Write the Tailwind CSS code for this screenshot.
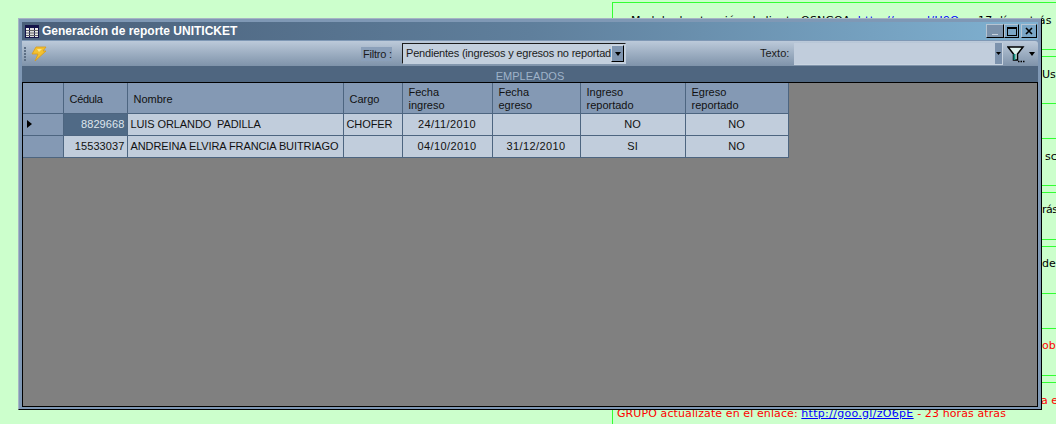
<!DOCTYPE html>
<html lang="en">
  <head>
    <meta charset="UTF-8" />
    <title>Generación de reporte UNITICKET</title>
    <script src="https://cdn.jsdelivr.net/npm/@tailwindcss/browser@4"></script>
  </head>
  <body class="relative w-[1056px] h-[424px] overflow-hidden bg-[#ccffcc] font-['DejaVu_Sans',sans-serif]">
    <!-- Page behind the window -->
    <div class="absolute left-[612px] top-[2px] w-[444px] h-px bg-[#33ff33]"></div>
    <div class="absolute left-[612px] top-[2px] w-px h-[422px] bg-[#33ff33]"></div>
    <div class="absolute left-[1042px] top-[49px] w-[14px] h-px bg-[#33ff33]"></div>
    <div class="absolute left-[1042px] top-[56px] w-[14px] h-px bg-[#33ff33]"></div>
    <div class="absolute left-[1042px] top-[103px] w-[14px] h-px bg-[#33ff33]"></div>
    <div class="absolute left-[1042px] top-[138px] w-[14px] h-px bg-[#33ff33]"></div>
    <div class="absolute left-[1042px] top-[185px] w-[14px] h-px bg-[#33ff33]"></div>
    <div class="absolute left-[1042px] top-[192px] w-[14px] h-px bg-[#33ff33]"></div>
    <div class="absolute left-[1042px] top-[239px] w-[14px] h-px bg-[#33ff33]"></div>
    <div class="absolute left-[1042px] top-[246px] w-[14px] h-px bg-[#33ff33]"></div>
    <div class="absolute left-[1042px] top-[293px] w-[14px] h-px bg-[#33ff33]"></div>
    <div class="absolute left-[1042px] top-[328px] w-[14px] h-px bg-[#33ff33]"></div>
    <div class="absolute left-[1042px] top-[375px] w-[14px] h-px bg-[#33ff33]"></div>
    <div class="absolute left-[1042px] top-[382px] w-[14px] h-px bg-[#33ff33]"></div>

    <p class="absolute left-[631px] top-[14px] whitespace-nowrap text-[11px] leading-[13px] tracking-[0.15px] text-black">Modulo de atención al cliente OSNGOA: <span class="text-[#0000ff] underline tracking-[0.4px]">http://goo.gl/U9Q</span>&nbsp;&nbsp;-&nbsp;&nbsp;17 días atrás</p>
    <p class="absolute left-[1042px] top-[68px] text-[11px] leading-[13px] text-black">Us</p>
    <p class="absolute left-[1045px] top-[150px] text-[11px] leading-[13px] text-black">sc</p>
    <p class="absolute left-[1042px] top-[203px] whitespace-nowrap text-[11px] leading-[13px] tracking-[-0.5px] text-black">rás</p>
    <p class="absolute left-[1042px] top-[257px] text-[11px] leading-[13px] text-black">de</p>
    <p class="absolute left-[1042px] top-[339px] text-[11px] leading-[13px] text-[#ff0000]">ob</p>
    <p class="absolute left-[1041px] top-[394px] whitespace-nowrap text-[11px] leading-[13px] text-[#ff0000]">a e</p>
    <p class="absolute left-[617px] top-[407px] whitespace-nowrap text-[11px] leading-[13px] tracking-[0.1px] text-[#ff0000]">GRUPO actualízate en el enlace: <span class="text-[#0000ff] underline tracking-[0.3px]">http://goo.gl/zO6pE</span> - 23 horas atras</p>

    <!-- Window -->
    <div class="absolute left-[18px] top-[18px] w-[1024px] h-[392px] flex flex-col bg-[#7f98b5] border border-t-[#a7b5c4] border-l-[#a7b5c4] border-r-black border-b-black pt-[3px] px-[3px] pb-[2px] font-['Liberation_Sans',sans-serif]">
      <!-- Title bar -->
      <div class="h-[18px] shrink-0 flex items-center pl-[3px] pr-[1px] bg-gradient-to-r from-[#4a607a] via-[#5f7f9c] to-[#80b2d2]">
        <svg class="w-[14px] h-[13px] shrink-0" viewBox="0 0 14 13">
          <rect width="14" height="13" fill="#14144a" />
          <rect x="1" y="3" width="3" height="9" fill="#eee" />
          <rect x="5" y="3" width="4" height="9" fill="#ddd" />
          <rect x="10" y="3" width="3" height="9" fill="#eee" />
          <path d="M1 5.5h12M1 8h12M1 10.5h12" stroke="#666" stroke-width="1" />
        </svg>
        <span class="ml-[3px] text-[12px] font-bold text-white whitespace-nowrap">Generación de reporte UNITICKET</span>
        <div class="ml-auto flex gap-0">
          <button class="w-[18px] h-[14px] flex items-end justify-center pb-[2px] bg-[#7b92ab] border border-[#b6c4d2] border-r-black border-b-black">
            <span class="block w-[6px] h-px bg-[#c8d2dc]"></span>
          </button>
          <button class="w-[15px] h-[14px] flex items-center justify-center bg-[#7aa6c6] border border-[#b6c4d2] border-r-black border-b-black">
            <span class="block w-[10px] h-[9px] border border-t-2 border-black"></span>
          </button>
          <button class="ml-[2px] w-[16px] h-[14px] flex items-center justify-center bg-[#7aa6c6] border border-[#b6c4d2] border-r-black border-b-black">
            <svg class="w-[8px] h-[8px]" viewBox="0 0 8 8"><path d="M1 1l6 6M7 1L1 7" stroke="#000" stroke-width="1.6" /></svg>
          </button>
        </div>
      </div>

      <!-- Toolbar -->
      <div class="mt-px h-[25px] shrink-0 flex items-center relative rounded-tr-[3px] bg-gradient-to-b from-[#bccada] to-[#7f93aa] text-[11px] text-[#1b1b1b]">
        <div class="ml-[2px] flex flex-col gap-px">
          <span class="block w-[2px] h-[2px] bg-[#5d6f85]"></span>
          <span class="block w-[2px] h-[2px] bg-[#5d6f85]"></span>
          <span class="block w-[2px] h-[2px] bg-[#5d6f85]"></span>
          <span class="block w-[2px] h-[2px] bg-[#5d6f85]"></span>
          <span class="block w-[2px] h-[2px] bg-[#5d6f85]"></span>
        </div>
        <svg class="ml-[5px] w-[16px] h-[18px]" viewBox="0 0 16 18">
          <path d="M5 2h10l-3 4h3L4 16l3-7H1z" fill="#f3c12f" stroke="#d99b16" stroke-width="0.8" />
          <path d="M6 4h5L8 7" fill="#fbe68b" />
        </svg>
        <span class="ml-[314px] w-[31px] pl-[2px] whitespace-nowrap leading-[14px] tracking-[-0.2px] bg-[#8ba0ba]">Filtro :</span>
        <div class="ml-[10px] w-[224px] h-[21px] flex items-stretch bg-[#c3cfdd] border border-[#1c1c1c] border-r-[#c3cfdd] border-b-[#c3cfdd]">
          <span class="flex-1 overflow-hidden whitespace-nowrap pl-[3px] leading-[18px] text-[11px] tracking-[-0.2px]">Pendientes (ingresos y egresos no reportados)</span>
          <span class="w-[13px] h-[17px] mr-[1px] mt-px flex items-center justify-center bg-[#7f95b0] border border-[#cfd8e2] border-r-black border-b-black">
            <svg class="w-[6px] h-[4px]" viewBox="0 0 6 4"><path d="M0 0h6L3 4z" fill="#000" /></svg>
          </span>
        </div>
        <span class="ml-[134px] w-[30px] whitespace-nowrap">Texto:</span>
        <div class="ml-[4px] w-[209px] h-[22px] flex bg-[#c1cddc] border-r border-b border-[#c9d4e0]">
          <span class="flex-1"></span>
          <span class="w-[7px] flex items-center justify-center bg-[#7c92ad]">
            <svg class="w-[5px] h-[3px]" viewBox="0 0 5 3"><path d="M0 0h5L2.5 3z" fill="#000" /></svg>
          </span>
        </div>
        <svg class="ml-[4px] w-[18px] h-[18px]" viewBox="0 0 18 18">
          <path d="M1 2h15l-5.500 7v6h-4V9z" fill="#dff2ee" stroke="#000" stroke-width="1.500" />
          <path d="M6.500 9h2v6h-2z" fill="#0f8f7f" />
          <path d="M11 16.500h1.500M13.500 16.500h1.500M16 16.500h1.500" stroke="#000" stroke-width="1.500" />
        </svg>
        <svg class="ml-[4px] w-[6px] h-[4px]" viewBox="0 0 6 4"><path d="M0 0h6L3 4z" fill="#000" /></svg>
      </div>

      <!-- Section band -->
      <div class="h-[16px] shrink-0 overflow-hidden bg-[#4f6680] text-center text-[11px] leading-[21px] text-[#9fb3c9]">EMPLEADOS</div>

      <!-- Grid -->
      <div class="flex-1 bg-[#808080] border border-black overflow-hidden">
        <table class="table-fixed border-collapse text-[11px] text-[#111] w-[765px]">
          <colgroup>
            <col class="w-[40px]" /><col class="w-[64px]" /><col class="w-[216px]" /><col class="w-[59px]" /><col class="w-[90px]" /><col class="w-[88px]" /><col class="w-[105px]" /><col class="w-[103px]" />
          </colgroup>
          <thead>
            <tr class="h-[30px] bg-[#8499b4] text-left font-normal leading-[13px]">
              <th class="border border-t-0 border-l-0 border-[#4d6580] font-normal"></th>
              <th class="border border-t-0 border-[#4d6580] font-normal pl-[6px] pt-[3px] tracking-[-0.3px]">Cédula</th>
              <th class="border border-t-0 border-[#4d6580] font-normal pl-[6px] pt-[3px]">Nombre</th>
              <th class="border border-t-0 border-[#4d6580] font-normal pl-[6px] pt-[3px]">Cargo</th>
              <th class="border border-t-0 border-[#4d6580] font-normal pl-[6px] pt-[2px]">Fecha<br />ingreso</th>
              <th class="border border-t-0 border-[#4d6580] font-normal pl-[6px] pt-[2px]">Fecha<br />egreso</th>
              <th class="border border-t-0 border-[#4d6580] font-normal pl-[6px] pt-[2px]">Ingreso<br />reportado</th>
              <th class="border border-t-0 border-[#4d6580] font-normal pl-[6px] pt-[2px]">Egreso<br />reportado</th>
            </tr>
          </thead>
          <tbody class="bg-[#c1cddc]">
            <tr class="h-[22px]">
              <td class="border border-l-0 border-[#4d6580] bg-[#8499b4] pl-[4px]">
                <svg class="w-[5px] h-[8px]" viewBox="0 0 5 8"><path d="M0 0l5 4-5 4z" fill="#000" /></svg>
              </td>
              <td class="border border-[#4d6580] bg-[#506a86] text-right pr-[2px] tracking-[0.1px] text-[#dfe6ee]">8829668</td>
              <td class="border border-[#4d6580] pl-[3px] whitespace-nowrap tracking-[-0.1px]">LUIS ORLANDO&nbsp; PADILLA</td>
              <td class="border border-[#4d6580] pl-[3px] tracking-[-0.1px]">CHOFER</td>
              <td class="border border-[#4d6580] text-center tracking-[0.4px]">24/11/2010</td>
              <td class="border border-[#4d6580] text-center"></td>
              <td class="border border-[#4d6580] text-center">NO</td>
              <td class="border border-[#4d6580] text-center">NO</td>
            </tr>
            <tr class="h-[22px]">
              <td class="border border-l-0 border-[#4d6580] bg-[#8499b4]"></td>
              <td class="border border-[#4d6580] text-right pr-[2px] tracking-[0.1px]">15533037</td>
              <td class="border border-[#4d6580] pl-[3px] whitespace-nowrap tracking-[-0.1px]">ANDREINA ELVIRA FRANCIA BUITRIAGO</td>
              <td class="border border-[#4d6580]"></td>
              <td class="border border-[#4d6580] text-center tracking-[0.4px]">04/10/2010</td>
              <td class="border border-[#4d6580] text-center tracking-[0.4px]">31/12/2010</td>
              <td class="border border-[#4d6580] text-center">SI</td>
              <td class="border border-[#4d6580] text-center">NO</td>
            </tr>
          </tbody>
        </table>
      </div>
    </div>
  </body>
</html>
